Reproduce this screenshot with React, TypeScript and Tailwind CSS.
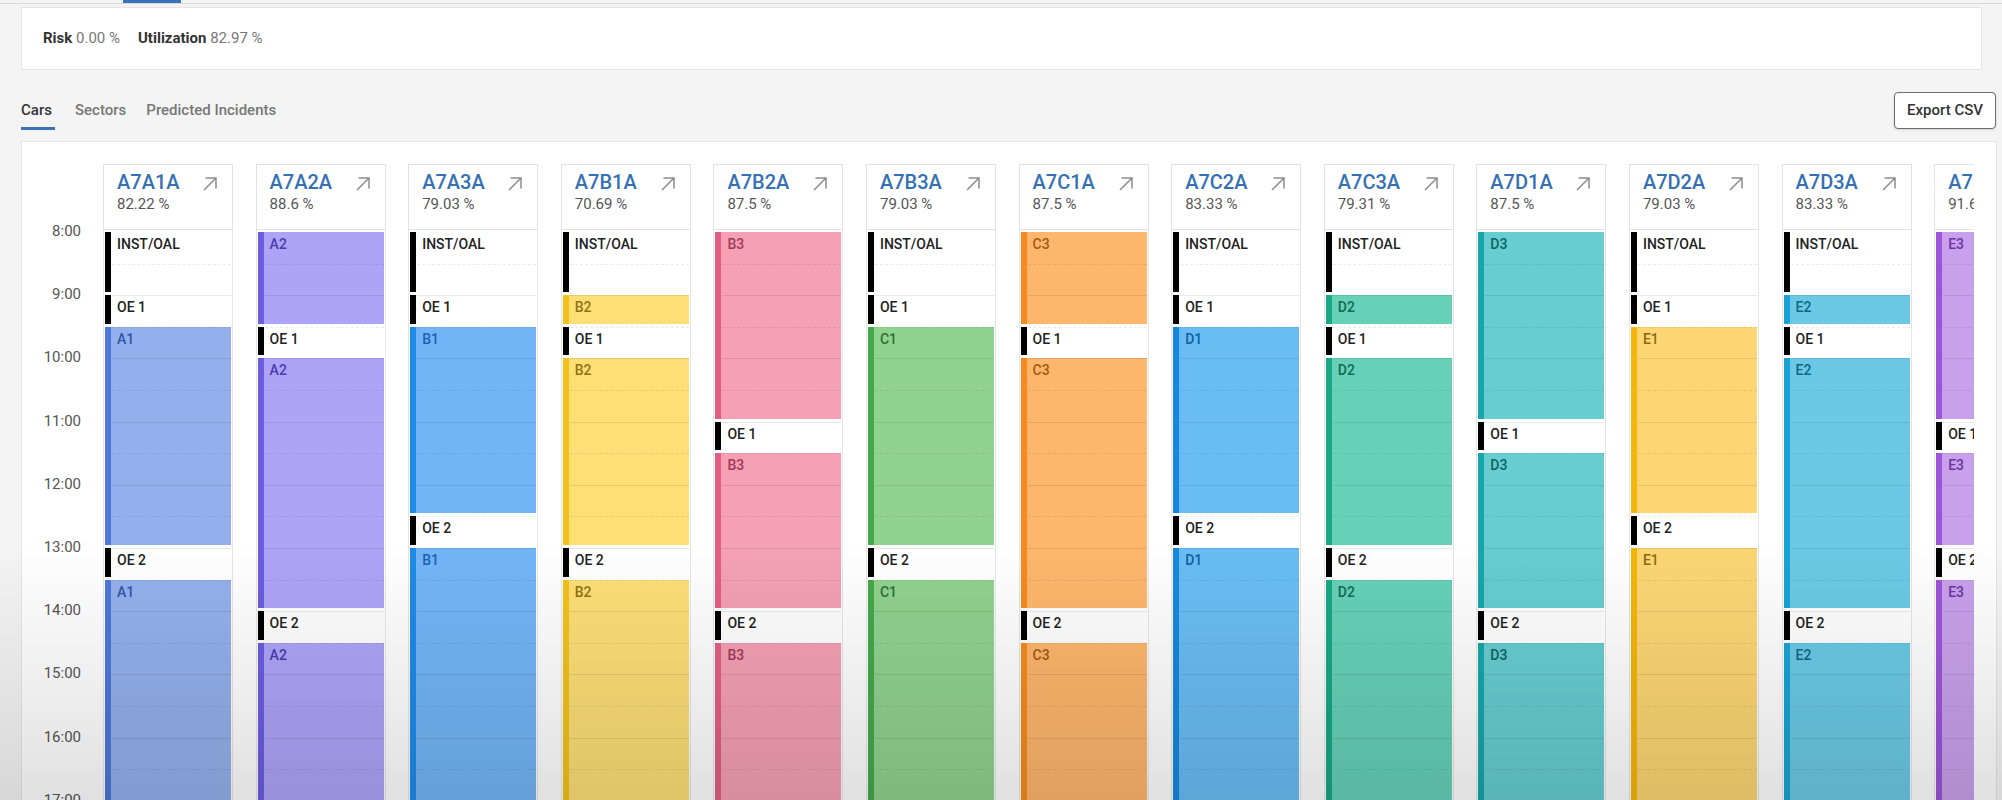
import { clsx } from "clsx";

const HOUR = 63.2;
const HOURS = ["8:00", "9:00", "10:00", "11:00", "12:00", "13:00", "14:00", "15:00", "16:00", "17:00"];

type Tone = { fill: string; bar: string; text: string };

const palette: Record<string, Tone> = {
  A1: { fill: "bg-[#94b0ec]", bar: "bg-[#4d78d9]", text: "text-[#2f55a6]" },
  A2: { fill: "bg-[#ada4f8]", bar: "bg-[#6b5de0]", text: "text-[#4b3ab0]" },
  B1: { fill: "bg-[#72b5f7]", bar: "bg-[#1f8ae8]", text: "text-[#1a62b5]" },
  B2: { fill: "bg-[#fddf76]", bar: "bg-[#f2c21b]", text: "text-[#8f7410]" },
  B3: { fill: "bg-[#f5a0b5]", bar: "bg-[#e25f82]", text: "text-[#a33a58]" },
  C1: { fill: "bg-[#90d28f]", bar: "bg-[#45a84a]", text: "text-[#2f6f31]" },
  C3: { fill: "bg-[#feb66c]", bar: "bg-[#f68a1e]", text: "text-[#a35a10]" },
  D1: { fill: "bg-[#69bdf4]", bar: "bg-[#1688e0]", text: "text-[#105f9f]" },
  D2: { fill: "bg-[#67d1b8]", bar: "bg-[#18a884]", text: "text-[#0e6b55]" },
  D3: { fill: "bg-[#67cdd0]", bar: "bg-[#17a6ab]", text: "text-[#0c6468]" },
  E1: { fill: "bg-[#fdd673]", bar: "bg-[#f5b50a]", text: "text-[#8a6a10]" },
  E2: { fill: "bg-[#6bc9e5]", bar: "bg-[#18a3d4]", text: "text-[#0e6688]" },
  E3: { fill: "bg-[#c9a0eb]", bar: "bg-[#9c55d8]", text: "text-[#6a35a0]" },
};

type Slot = [string, number];

const cars: { name: string; pct: string; slots: Slot[] }[] = [
  { name: "A7A1A", pct: "82.22 %", slots: [["INST/OAL", 1], ["OE 1", 0.5], ["A1", 3.5], ["OE 2", 0.5], ["A1", 4.5]] },
  { name: "A7A2A", pct: "88.6 %", slots: [["A2", 1.5], ["OE 1", 0.5], ["A2", 4], ["OE 2", 0.5], ["A2", 3.5]] },
  { name: "A7A3A", pct: "79.03 %", slots: [["INST/OAL", 1], ["OE 1", 0.5], ["B1", 3], ["OE 2", 0.5], ["B1", 5]] },
  { name: "A7B1A", pct: "70.69 %", slots: [["INST/OAL", 1], ["B2", 0.5], ["OE 1", 0.5], ["B2", 3], ["OE 2", 0.5], ["B2", 4.5]] },
  { name: "A7B2A", pct: "87.5 %", slots: [["B3", 3], ["OE 1", 0.5], ["B3", 2.5], ["OE 2", 0.5], ["B3", 3.5]] },
  { name: "A7B3A", pct: "79.03 %", slots: [["INST/OAL", 1], ["OE 1", 0.5], ["C1", 3.5], ["OE 2", 0.5], ["C1", 4.5]] },
  { name: "A7C1A", pct: "87.5 %", slots: [["C3", 1.5], ["OE 1", 0.5], ["C3", 4], ["OE 2", 0.5], ["C3", 3.5]] },
  { name: "A7C2A", pct: "83.33 %", slots: [["INST/OAL", 1], ["OE 1", 0.5], ["D1", 3], ["OE 2", 0.5], ["D1", 5]] },
  { name: "A7C3A", pct: "79.31 %", slots: [["INST/OAL", 1], ["D2", 0.5], ["OE 1", 0.5], ["D2", 3], ["OE 2", 0.5], ["D2", 4.5]] },
  { name: "A7D1A", pct: "87.5 %", slots: [["D3", 3], ["OE 1", 0.5], ["D3", 2.5], ["OE 2", 0.5], ["D3", 3.5]] },
  { name: "A7D2A", pct: "79.03 %", slots: [["INST/OAL", 1], ["OE 1", 0.5], ["E1", 3], ["OE 2", 0.5], ["E1", 5]] },
  { name: "A7D3A", pct: "83.33 %", slots: [["INST/OAL", 1], ["E2", 0.5], ["OE 1", 0.5], ["E2", 4], ["OE 2", 0.5], ["E2", 3.5]] },
  { name: "A7E1A", pct: "91.67 %", slots: [["E3", 3], ["OE 1", 0.5], ["E3", 1.5], ["OE 2", 0.5], ["E3", 4.5]] },
];

function OpenIcon() {
  return (
    <svg width="16" height="16" viewBox="0 0 16 16" fill="none" stroke="#8c8c8c" strokeWidth="1.5" className="mt-[7px] shrink-0">
      <path d="M2 14 14 2M3.5 2H14v10.5" />
    </svg>
  );
}

function Block({ label, dur }: { label: string; dur: number }) {
  const tone = palette[label];
  return (
    <div className="shrink-0 pb-[3px]" style={{ height: dur * HOUR }}>
      <div className={clsx("flex h-full", tone ? tone.fill : "bg-white")}>
        <div className={clsx("h-full w-[6px] shrink-0", tone ? tone.bar : "bg-black")} />
        <span className={clsx("pl-[6px] pt-[4px] text-[14px] leading-4 font-medium", tone ? tone.text : "text-[#222]")}>
          {label}
        </span>
      </div>
    </div>
  );
}

function CarColumn({ name, pct, slots }: { name: string; pct: string; slots: Slot[] }) {
  const lines = Array.from({ length: 19 }, (_, i) => i + 1);
  return (
    <div className="flex w-[130px] shrink-0 flex-col">
      <div className="flex h-[66px] shrink-0 justify-between border border-[#e2e2e2] bg-white pr-[14px] pl-[13px] pt-[4px]">
        <div>
          <div className="text-[20px] leading-[26px] font-medium text-[#3470b5]">{name}</div>
          <div className="text-[15px] leading-[18px] whitespace-nowrap text-[#555]">{pct}</div>
        </div>
        <OpenIcon />
      </div>
      <div className="relative flex shrink-0 flex-col border-x border-[#e6e6e6] px-px pt-[2px]">
        {slots.map(([label, dur], i) => (
          <Block key={i} label={label} dur={dur} />
        ))}
        {/* half hour grid */}
        {lines.map((k) => (
          <div
            key={k}
            className={clsx(
              "pointer-events-none absolute right-px left-[8px] border-t",
              k % 2 === 0 ? "border-black/[0.09]" : "border-dashed border-black/[0.08]"
            )}
            style={{ top: 2 + (k * HOUR) / 2 }}
          />
        ))}
      </div>
    </div>
  );
}

export default function App() {
  return (
    <div className="relative h-[800px] w-[2002px] overflow-hidden bg-[#f4f4f4] font-[family-name:Roboto,'Liberation_Sans',sans-serif] text-[#333]">
      <div className="h-[4px] border-b border-[#d8d8d8]">
        <div className="ml-[123px] h-[3px] w-[58px] bg-[#3a72b8]" />
      </div>

      {/* summary */}
      <div className="mt-[3px] mr-[20px] ml-[21px] flex h-[63px] items-center gap-[18px] border border-[#e4e4e4] bg-white px-[21px] text-[15px]">
        <span>
          <span className="font-bold text-[#333]">Risk</span> <span className="text-[#777]">0.00 %</span>
        </span>
        <span>
          <span className="font-bold text-[#333]">Utilization</span> <span className="text-[#777]">82.97 %</span>
        </span>
      </div>

      {/* tabs */}
      <div className="mt-[22px] mr-[6px] ml-[21px] flex items-start justify-between">
        <div className="flex gap-[20px] pt-[8px] text-[15px] font-medium">
          <div className="flex flex-col">
            <span className="leading-5 text-[#333]">Cars</span>
            <span className="mt-[7px] h-[3px] w-[34px] bg-[#3a72b8]" />
          </div>
          <span className="leading-5 text-[#777]">Sectors</span>
          <span className="leading-5 text-[#777]">Predicted Incidents</span>
        </div>
        <button className="h-[37px] rounded-[4px] border border-[#6b6b6b] bg-white px-[12px] text-[15px] font-medium text-[#333] shadow-sm">
          Export CSV
        </button>
      </div>

      {/* schedule */}
      <div className="mt-[11px] mr-[5px] ml-[21px] flex h-[700px] border border-[#e6e6e6] bg-white">
        <div className="flex w-[59px] shrink-0 flex-col pt-[79px] text-right text-[15px] leading-5 text-[#555]">
          {HOURS.map((h) => (
            <div key={h} className="shrink-0" style={{ height: HOUR }}>
              {h}
            </div>
          ))}
        </div>
        <div className="mr-[22px] ml-[22px] flex min-w-0 flex-1 gap-[22.6px] overflow-hidden pt-[22px]">
          {cars.map((c) => (
            <CarColumn key={c.name} {...c} />
          ))}
        </div>
      </div>

      <div className="pointer-events-none absolute inset-x-0 bottom-0 h-[260px] bg-linear-to-b from-transparent to-black/[0.12]" />
    </div>
  );
}
